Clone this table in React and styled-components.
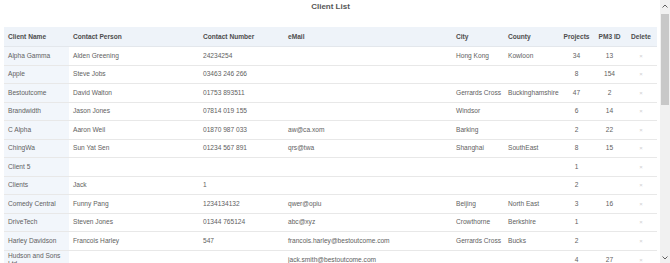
import React from 'react';
import styled, { createGlobalStyle } from 'styled-components';

const GlobalStyle = createGlobalStyle`
    html, body {
        margin: 0;
        padding: 0;
        background: #fff;
        font-family: "Liberation Sans", Arial, sans-serif;
    }
`;

const Shell = styled.div`
    display: flex;
    height: 263px;
    overflow: hidden;
`;

const Main = styled.div`
    flex: 1;
    min-width: 0;
    padding: 0 3px 0 4px;
    overflow: hidden;
`;

const Title = styled.h1`
    margin: 0;
    padding-top: 2px;
    height: 27px;
    box-sizing: border-box;
    text-align: center;
    font-size: 8px;
    line-height: 10px;
    font-weight: bold;
    color: #555;
`;

const Table = styled.table`
    width: 100%;
    border-collapse: collapse;
    table-layout: fixed;
    font-size: 6.6px;
    color: #616161;
`;

const HeadRow = styled.tr`
    background: #eef3f9;
`;

const Th = styled.th`
    height: 19px;
    padding: 0 3px 0 4px;
    font-weight: bold;
    color: #4d4d4d;
    text-align: ${p => (p.$center ? 'center' : 'left')};
    border-bottom: 1px solid #e3e7ec;
    white-space: nowrap;
`;

const Row = styled.tr`
    border-bottom: 1px solid #e8e8e8;
`;

const Td = styled.td`
    height: 18.5px;
    padding: 1px 3px 1px 4px;
    box-sizing: border-box;
    line-height: 8px;
    vertical-align: middle;
    text-align: ${p => (p.$center ? 'center' : 'left')};
    background: ${p => (p.$first ? '#f2f6fb' : 'transparent')};
    white-space: ${p => (p.$first ? 'normal' : 'nowrap')};
`;

const DeleteMark = styled.span`
    color: #cfcfcf;
    font-size: 6px;
`;

const ScrollBar = styled.div`
    width: 10px;
    flex-shrink: 0;
    display: flex;
    flex-direction: column;
    background: #f1f1f1;
`;

const ScrollArrow = styled.div`
    height: 11px;
    display: flex;
    align-items: center;
    justify-content: center;
`;

const Track = styled.div`
    flex: 1;
    padding-top: 3px;
`;

const Thumb = styled.div`
    width: 8px;
    height: 91px;
    margin-left: 1px;
    background: #c8c8c8;
`;

const columns = [
    { title: 'Client Name', width: 65 },
    { title: 'Contact Person', width: 130 },
    { title: 'Contact Number', width: 85 },
    { title: 'eMail', width: 168 },
    { title: 'City', width: 52 },
    { title: 'County', width: 54 },
    { title: 'Projects', width: 36, center: true },
    { title: 'PM3 ID', width: 30, center: true },
    { title: 'Delete', width: 33, center: true },
];

const clients = [
    ['Alpha Gamma', 'Alden Greening', '24234254', '', 'Hong Kong', 'Kowloon', '34', '13'],
    ['Apple', 'Steve Jobs', '03463 246 266', '', '', '', '8', '154'],
    ['Bestoutcome', 'David Walton', '01753 893511', '', 'Gerrards Cross', 'Buckinghamshire', '47', '2'],
    ['Brandwidth', 'Jason Jones', '07814 019 155', '', 'Windsor', '', '6', '14'],
    ['C Alpha', 'Aaron Weil', '01870 987 033', 'aw@ca.xom', 'Barking', '', '2', '22'],
    ['ChingWa', 'Sun Yat Sen', '01234 567 891', 'qrs@twa', 'Shanghai', 'SouthEast', '8', '15'],
    ['Client 5', '', '', '', '', '', '1', ''],
    ['Clients', 'Jack', '1', '', '', '', '2', ''],
    ['Comedy Central', 'Funny Pang', '1234134132', 'qwer@opiu', 'Beijing', 'North East', '3', '16'],
    ['DriveTech', 'Steven Jones', '01344 765124', 'abc@xyz', 'Crowthorne', 'Berkshire', '1', ''],
    ['Harley Davidson', 'Francois Harley', '547', 'francois.harley@bestoutcome.com', 'Gerrards Cross', 'Bucks', '2', ''],
    ['Hudson and Sons Ltd', '', '', 'jack.smith@bestoutcome.com', '', '', '4', '27'],
];

function Chevron({ up }) {
    return (
        <svg width="6" height="4" viewBox="0 0 6 4">
            <path
                d={up ? 'M0.5 3.5 L3 1 L5.5 3.5' : 'M0.5 0.5 L3 3 L5.5 0.5'}
                fill="none"
                stroke="#606060"
                strokeWidth="1"
            />
        </svg>
    );
}

function App() {
    return (
        <Shell>
            <GlobalStyle />
            <Main>
                <Title>Client List</Title>
                <Table>
                    <colgroup>
                        {columns.map(c => (
                            <col key={c.title} style={{ width: c.width }} />
                        ))}
                    </colgroup>
                    <thead>
                        <HeadRow>
                            {columns.map(c => (
                                <Th key={c.title} $center={c.center}>{c.title}</Th>
                            ))}
                        </HeadRow>
                    </thead>
                    <tbody>
                        {clients.map(row => (
                            <Row key={row[0]}>
                                {row.map((cell, i) => (
                                    <Td key={i} $first={i === 0} $center={columns[i].center}>
                                        {cell}
                                    </Td>
                                ))}
                                <Td $center>
                                    <DeleteMark>×</DeleteMark>
                                </Td>
                            </Row>
                        ))}
                    </tbody>
                </Table>
            </Main>
            <ScrollBar>
                <ScrollArrow><Chevron up /></ScrollArrow>
                <Track><Thumb /></Track>
                <ScrollArrow><Chevron /></ScrollArrow>
            </ScrollBar>
        </Shell>
    );
}

export default App;
